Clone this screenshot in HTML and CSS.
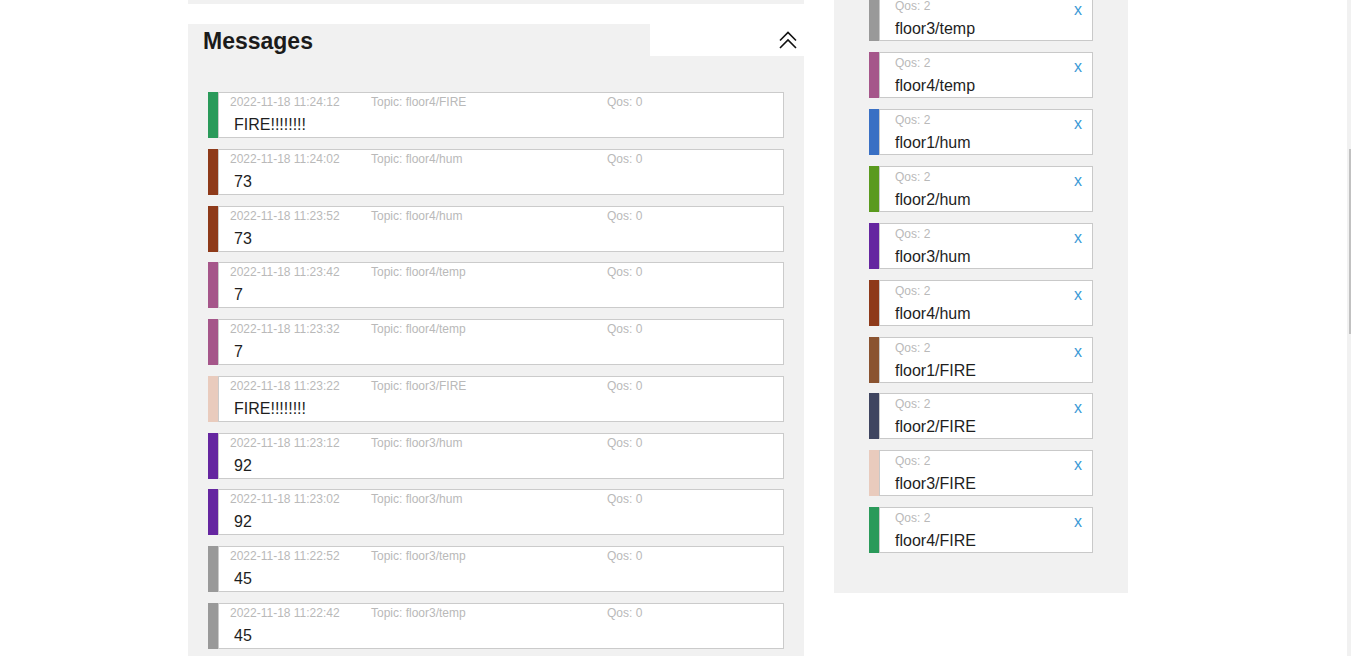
FILE: index.html
```html
<!DOCTYPE html>
<html lang="en">
<head>
<meta charset="utf-8">
<title>MQTT Messages</title>
<link rel="stylesheet" href="styles.css">
</head>
<body>
<div class="page">
  <div class="left-col">
    <div class="prev-card"></div>
    <section class="card messages">
      <div class="card-head">
        <h2 class="card-title">Messages</h2>
        <div class="collapse-btn">
          <svg class="chev" width="18" height="18" viewBox="0 0 18 18" fill="none" stroke="#111" stroke-width="1.6" stroke-linejoin="miter">
            <path d="M1 9.5 L9 1.5 L17 9.5"/>
            <path d="M1 17 L9 9 L17 17"/>
          </svg>
        </div>
      </div>
      <div class="msg-list">
        <div class="msg"><span class="bar c-green"></span><div class="msg-box"><div class="meta"><span class="m-date">2022-11-18 11:24:12</span><span class="m-topic">Topic: floor4/FIRE</span><span class="m-qos">Qos: 0</span></div><div class="msg-text">FIRE!!!!!!!!</div></div></div>
        <div class="msg"><span class="bar c-rust"></span><div class="msg-box"><div class="meta"><span class="m-date">2022-11-18 11:24:02</span><span class="m-topic">Topic: floor4/hum</span><span class="m-qos">Qos: 0</span></div><div class="msg-text">73</div></div></div>
        <div class="msg"><span class="bar c-rust"></span><div class="msg-box"><div class="meta"><span class="m-date">2022-11-18 11:23:52</span><span class="m-topic">Topic: floor4/hum</span><span class="m-qos">Qos: 0</span></div><div class="msg-text">73</div></div></div>
        <div class="msg"><span class="bar c-mauve"></span><div class="msg-box"><div class="meta"><span class="m-date">2022-11-18 11:23:42</span><span class="m-topic">Topic: floor4/temp</span><span class="m-qos">Qos: 0</span></div><div class="msg-text">7</div></div></div>
        <div class="msg"><span class="bar c-mauve"></span><div class="msg-box"><div class="meta"><span class="m-date">2022-11-18 11:23:32</span><span class="m-topic">Topic: floor4/temp</span><span class="m-qos">Qos: 0</span></div><div class="msg-text">7</div></div></div>
        <div class="msg"><span class="bar c-blush"></span><div class="msg-box"><div class="meta"><span class="m-date">2022-11-18 11:23:22</span><span class="m-topic">Topic: floor3/FIRE</span><span class="m-qos">Qos: 0</span></div><div class="msg-text">FIRE!!!!!!!!</div></div></div>
        <div class="msg"><span class="bar c-purple"></span><div class="msg-box"><div class="meta"><span class="m-date">2022-11-18 11:23:12</span><span class="m-topic">Topic: floor3/hum</span><span class="m-qos">Qos: 0</span></div><div class="msg-text">92</div></div></div>
        <div class="msg"><span class="bar c-purple"></span><div class="msg-box"><div class="meta"><span class="m-date">2022-11-18 11:23:02</span><span class="m-topic">Topic: floor3/hum</span><span class="m-qos">Qos: 0</span></div><div class="msg-text">92</div></div></div>
        <div class="msg"><span class="bar c-gray"></span><div class="msg-box"><div class="meta"><span class="m-date">2022-11-18 11:22:52</span><span class="m-topic">Topic: floor3/temp</span><span class="m-qos">Qos: 0</span></div><div class="msg-text">45</div></div></div>
        <div class="msg"><span class="bar c-gray"></span><div class="msg-box"><div class="meta"><span class="m-date">2022-11-18 11:22:42</span><span class="m-topic">Topic: floor3/temp</span><span class="m-qos">Qos: 0</span></div><div class="msg-text">45</div></div></div>
      </div>
    </section>
  </div>

  <aside class="subs">
    <div class="sub"><span class="bar c-gray"></span><div class="sub-box"><div class="sub-info"><div class="meta">Qos: 2</div><div class="sub-topic">floor3/temp</div></div><span class="sub-x">x</span></div></div>
    <div class="sub"><span class="bar c-mauve"></span><div class="sub-box"><div class="sub-info"><div class="meta">Qos: 2</div><div class="sub-topic">floor4/temp</div></div><span class="sub-x">x</span></div></div>
    <div class="sub"><span class="bar c-blue"></span><div class="sub-box"><div class="sub-info"><div class="meta">Qos: 2</div><div class="sub-topic">floor1/hum</div></div><span class="sub-x">x</span></div></div>
    <div class="sub"><span class="bar c-lime"></span><div class="sub-box"><div class="sub-info"><div class="meta">Qos: 2</div><div class="sub-topic">floor2/hum</div></div><span class="sub-x">x</span></div></div>
    <div class="sub"><span class="bar c-purple"></span><div class="sub-box"><div class="sub-info"><div class="meta">Qos: 2</div><div class="sub-topic">floor3/hum</div></div><span class="sub-x">x</span></div></div>
    <div class="sub"><span class="bar c-rust"></span><div class="sub-box"><div class="sub-info"><div class="meta">Qos: 2</div><div class="sub-topic">floor4/hum</div></div><span class="sub-x">x</span></div></div>
    <div class="sub"><span class="bar c-brown"></span><div class="sub-box"><div class="sub-info"><div class="meta">Qos: 2</div><div class="sub-topic">floor1/FIRE</div></div><span class="sub-x">x</span></div></div>
    <div class="sub"><span class="bar c-slate"></span><div class="sub-box"><div class="sub-info"><div class="meta">Qos: 2</div><div class="sub-topic">floor2/FIRE</div></div><span class="sub-x">x</span></div></div>
    <div class="sub"><span class="bar c-blush"></span><div class="sub-box"><div class="sub-info"><div class="meta">Qos: 2</div><div class="sub-topic">floor3/FIRE</div></div><span class="sub-x">x</span></div></div>
    <div class="sub"><span class="bar c-green"></span><div class="sub-box"><div class="sub-info"><div class="meta">Qos: 2</div><div class="sub-topic">floor4/FIRE</div></div><span class="sub-x">x</span></div></div>
  </aside>
</div>
<div class="scrollbar"><div class="scroll-thumb"></div></div>
</body>
</html>
```

FILE: styles.css
```css
html, body {
  margin: 0;
  padding: 0;
  height: 100%;
  overflow: hidden;
  background: #ffffff;
}

body {
  font-family: "Liberation Sans", Arial, sans-serif;
  color: #222;
}

.page {
  display: flex;
  align-items: flex-start;
  gap: 30px;
  margin-left: 188px;
  margin-top: -140px;
}

.left-col {
  width: 616px;
  display: flex;
  flex-direction: column;
}

.prev-card {
  height: 144px;
  background: #f1f1f1;
  margin-bottom: 20px;
}

.card {
  background: #f1f1f1;
}

.card-head {
  display: flex;
  height: 32px;
}

.card-title {
  flex: 1;
  margin: 0;
  padding: 3px 0 0 15px;
  font-size: 23px;
  font-weight: bold;
  line-height: 28px;
  color: #1b1b1b;
}

.collapse-btn {
  width: 154px;
  background: #ffffff;
  display: flex;
  justify-content: flex-end;
  align-items: flex-start;
  padding: 7px 7px 0 0;
  box-sizing: border-box;
}

.chev {
  display: block;
}

.msg-list {
  display: flex;
  flex-direction: column;
  gap: 10.78px;
  padding: 36px 20px 20px 20px;
}

.msg, .sub {
  display: flex;
  height: 46px;
}

.bar {
  width: 10px;
  flex: none;
}

.msg-box {
  flex: 1;
  background: #fff;
  border: 1px solid #cbcbcb;
  padding: 2px 0 0 11px;
  box-sizing: border-box;
}

.meta {
  display: flex;
  font-size: 12px;
  line-height: 14px;
  color: #b9b9b9;
}

.m-date {
  width: 141px;
}

.m-topic {
  width: 236px;
}

.msg-text {
  margin-top: 6px;
  padding-left: 4px;
  font-size: 16px;
  line-height: 20px;
  color: #1e1e1e;
}

.subs {
  width: 294px;
  box-sizing: border-box;
  background: #f1f1f1;
  padding: 135.3px 35px 40px 35px;
  display: flex;
  flex-direction: column;
  gap: 10.875px;
}

.sub-box {
  flex: 1;
  display: flex;
  background: #fff;
  border: 1px solid #c9c9c9;
  box-sizing: border-box;
  padding: 3px 10px 0 15px;
}

.sub-info {
  flex: 1;
}

.sub-topic {
  margin-top: 6px;
  font-size: 16px;
  line-height: 20px;
  color: #1e1e1e;
}

.sub-x {
  font-size: 16px;
  line-height: 20px;
  margin-top: 1px;
  color: #3a9ad6;
}

.c-green { background: #2a9a5a; }
.c-rust { background: #8e3a1a; }
.c-mauve { background: #a5568a; }
.c-blush { background: #e9cbbd; }
.c-purple { background: #6526a0; }
.c-gray { background: #999999; }
.c-blue { background: #3a70c4; }
.c-lime { background: #5a9a1e; }
.c-brown { background: #8a5330; }
.c-slate { background: #3f4560; }

.scrollbar {
  position: fixed;
  top: 0;
  right: 0;
  width: 4px;
  height: 100%;
  background: #f1f1f1;
  display: flex;
  flex-direction: column;
  align-items: flex-end;
}

.scroll-thumb {
  margin-top: 149px;
  width: 2px;
  height: 185px;
  background: #c1c1c1;
}
```
